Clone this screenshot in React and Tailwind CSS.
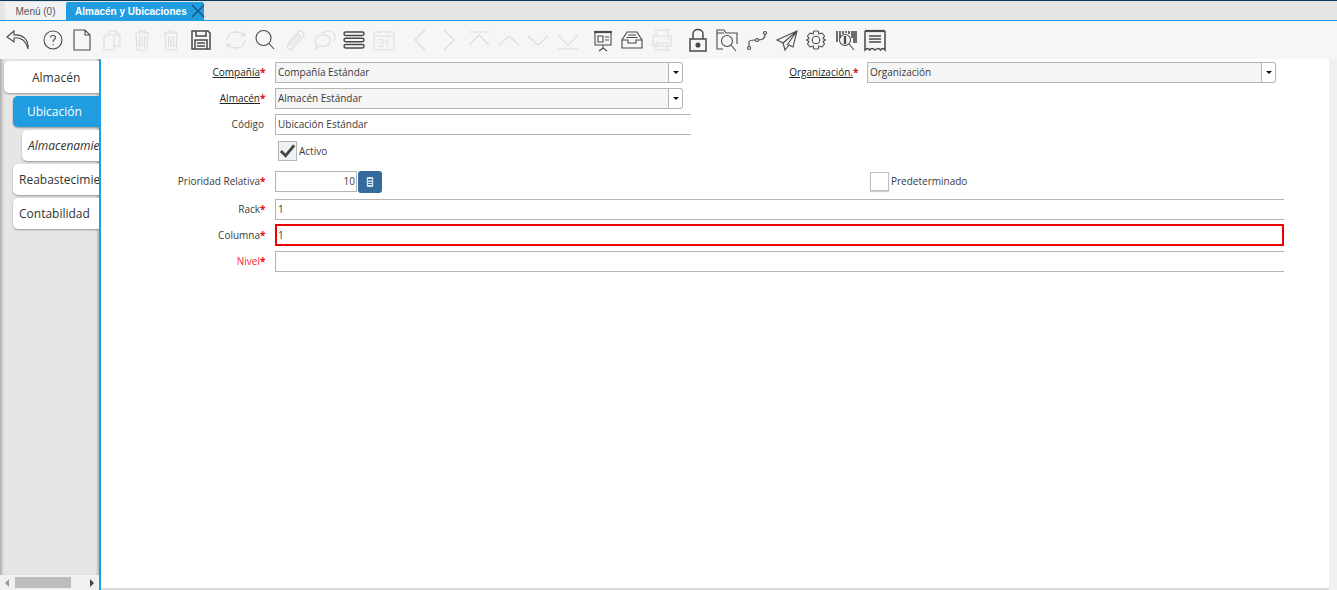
import React from "react";

const font = "font-['Open_Sans','Noto_Sans',sans-serif]";

// toolbar icons, drawn in a 28x28 box
const Undo = () => (
  <path d="M9 5 L2 11 L9 16 L9 12 C15 11 21 14 23 23 C24 13 17 8 9 9 Z" />
);
const Help = () => (
  <>
    <circle cx="14" cy="14" r="9" />
    <path d="M11.5 11.5 C11.5 8.8 16.5 8.8 16.5 11.5 C16.5 13.5 14 13.5 14 16" />
    <path d="M14 18 L14 19.2" />
  </>
);
const NewDoc = () => <path d="M6 4 H17 L22 9 V24 H6 Z M17 4 V9 H22" />;
const Copy = () => <path d="M8 9 H16 V24 H6 V11 Z M11 9 V5 H18 L22 9 V20 H16 M18 5 V9 H22" />;
const Trash = () => (
  <path d="M7 7 H21 M11 7 V5 H17 V7 M8 7 L9 24 H19 L20 7 M11.5 10 V21 M14 10 V21 M16.5 10 V21" />
);
const Save = () => (
  <path d="M5 5 H21 L23 7 V23 H5 Z M9 5 V10 H19 V5 M8 23 V14 H20 V23 M10 17 H18 M10 20 H18" />
);
const Refresh = () => (
  <path d="M5 14 C5 8 12 4 19 7 L23 10 M23 5 V10 H18 M23 14 C23 20 16 24 9 21 L5 18 M5 23 V18 H10" />
);
const Search = () => (
  <>
    <circle cx="12.5" cy="12" r="7.5" />
    <path d="M18 17.5 L23 23" />
  </>
);
const Clip = () => (
  <path d="M7 17 L17 6 C20 3 25 7 22 11 L11 23 C9 25 5 22 7 19 L17 9 C18 8 20 10 19 11 L10 20" />
);
const Chat = () => (
  <path d="M4 15 C4 11 8 9 12 9 C17 9 20 12 19 16 C18 20 12 21 9 20 L5 23 L6 19 C5 18 4 17 4 15 Z M11 8 C13 5 18 4 21 6 C25 8 25 13 22 15" />
);
const Lines = () => (
  <>
    <rect x="4" y="6" width="20" height="3.4" rx="1.7" />
    <rect x="4" y="12.3" width="20" height="3.4" rx="1.7" />
    <rect x="4" y="18.6" width="20" height="3.4" rx="1.7" />
  </>
);
const Calendar = () => (
  <>
    <path d="M4 6 H24 V24 H4 Z M4 10 H24 M9 4 V7 M19 4 V7" />
    <text x="14" y="21" textAnchor="middle" fontSize="10" fill="currentColor" stroke="none">
      31
    </text>
  </>
);
const Prev = () => <path d="M19 4 L9 14 L19 24" />;
const Next = () => <path d="M9 4 L19 14 L9 24" />;
const First = () => <path d="M4 6 H24 M4 19 L14 9 L24 19" />;
const Up = () => <path d="M4 19 L14 10 L24 19" />;
const Down = () => <path d="M4 10 L14 19 L24 10" />;
const Last = () => <path d="M4 9 L14 19 L24 9 M4 23 H24" />;
const Board = () => (
  <>
    <path d="M5 6 H23" strokeWidth="2.2" />
    <path d="M6 6 V19 H22 V6 M14 19 V22 M10 25 L14 22 L18 25 M9 10 H14 V16 H9 Z M16 11 H20 M16 14 H20" />
  </>
);
const Tray = () => (
  <path d="M9 6 H19 L24 14 V22 H4 V14 Z M4 14 H10 V17 H18 V14 H24 M10 9 H18 M8.5 11.5 H19.5" />
);
const Printer = () => (
  <path d="M8 10 V4 H20 V10 M5 10 H23 V20 H5 Z M8 17 H20 V24 H8 Z M19 13 H21" />
);
const Lock = () => (
  <>
    <path d="M9 13 V8 C9 2 19 2 19 8 V13 M6 13 H22 V25 H6 Z" />
    <circle cx="14" cy="19" r="1.8" fill="currentColor" />
  </>
);
const FolderSearch = () => (
  <>
    <path d="M10 23 H4 V4 H11 L13 7 H24 V18 M4 7 H11" />
    <circle cx="14" cy="15" r="5.5" />
    <path d="M18 19 L23 25" />
  </>
);
const Route = () => (
  <>
    <circle cx="6" cy="22" r="1.5" />
    <circle cx="14" cy="14" r="1.5" />
    <circle cx="22" cy="7" r="1.5" />
    <path d="M6 20.5 V16 C6 14.5 8 14 12.5 14 M15.5 14 C19 14 22 13 22 8.5" />
  </>
);
const Send = () => <path d="M24 5 L4 14 L10 17 L12 24 L16 19 L20 21 Z M24 5 L10 17 M24 5 L14 19" />;
const Gear = () => (
  <>
    <circle cx="14" cy="14" r="3.8" />
    <path
      strokeLinejoin="round"
      d="M12 5 H16 L17 8 L20 7 L22.5 10 L21 12.5 L23.5 14 L21 15.5 L22.5 18 L20 21 L17 20 L16 23 H12 L11 20 L8 21 L5.5 18 L7 15.5 L4.5 14 L7 12.5 L5.5 10 L8 7 L11 8 Z"
    />
  </>
);
const Barcode = () => (
  <>
    <path d="M5 16 V5 M8 12 V5 M11 8 V5 M14 7 V5 M17 8 V5 M20 12 V5 M22 17 V5 M24 17 V5" strokeWidth="1.6" />
    <circle cx="13" cy="14" r="5.5" />
    <path d="M13 10 V18" strokeWidth="2.4" />
    <path d="M17 18 L22 24" />
  </>
);
const Receipt = () => (
  <>
    <path d="M4 5 H24" strokeWidth="2.2" />
    <path d="M4 5 V24 C6 22 7 22 8.5 24 C10 22 12 22 14 24 C17 22 18 22 19.5 24 C21 22 22 22 24 24 V5 M8 10 H20 M8 13 H20 M8 16 H20" />
  </>
);

const ToolIcon = ({ children, off, heavy }) => (
  <div className="flex w-[29.6px] shrink-0 justify-center">
    <svg
      viewBox="0 0 28 28"
      fill="none"
      stroke="currentColor"
      strokeWidth={heavy ? 1.5 : 1.1}
      className={`h-[28px] w-[28px] ${off ? "text-[#dcdcdc]" : "text-[#4a4a4a]"}`}
    >
      {children}
    </svg>
  </div>
);

const Caret = () => (
  <span className="border-x-[3.5px] border-t-[3.5px] border-x-transparent border-t-[#111111]" />
);

const Select = ({ value, width }) => (
  <div className={`flex h-[21px] ${width}`}>
    <div className="flex min-w-0 flex-1 items-center border border-[#b5b5b5] bg-[#f5f5f5] pl-[2px] text-[10px] text-[#3a3a3a]">
      {value}
    </div>
    <div className="flex w-[14px] items-center justify-center rounded-r-[3px] border border-l-0 border-[#b5b5b5] bg-white">
      <Caret />
    </div>
  </div>
);

const Label = ({ children, req, link, red, width = "w-[163px]" }) => (
  <div className={`flex shrink-0 justify-end text-[10px] ${width} ${red ? "text-[#ff2233]" : "text-[#3a3a3a]"}`}>
    <span className={link ? "underline text-[#222222]" : ""}>{children}</span>
    {req && <span className="w-[4px] font-bold text-[#e01020]">*</span>}
  </div>
);

const Input = ({ value, className = "" }) => (
  <div className={`flex h-[21px] items-center border-y border-l border-[#b5b5b5] bg-white pl-[2px] text-[10px] text-[#3a3a3a] ${className}`}>
    {value}
  </div>
);

const Tab = ({ label, active, italic, indent, height = "h-[31px]", text = "pl-[6px]" }) => (
  <div
    className={`mb-[3px] flex items-center overflow-hidden whitespace-nowrap rounded-l-[5px] shadow-[0_1px_2px_rgba(0,0,0,0.35)] ${height} ${indent} ${text} ${
      active ? "bg-[#1f9de0] font-medium text-white" : "bg-white text-[#333333]"
    } ${italic ? "italic" : ""}`}
  >
    {label}
  </div>
);

export default function App() {
  return (
    <div className={`flex h-[590px] w-[1337px] flex-col overflow-hidden bg-white ${font}`}>
      {/* window tabs */}
      <div className="h-[1px] bg-[#0a3a5c]" />
      <div className="flex h-[19px] items-end bg-[#e6e6e6] pl-[5px] font-['Liberation_Sans',sans-serif] text-[10px]">
        <div className="flex h-[18px] w-[61px] items-center justify-center bg-[#f2f2f2] text-[#555555]">
          Menú (0)
        </div>
        <div className="flex h-[18px] w-[138px] items-center whitespace-nowrap rounded-t-[2px] bg-[#1f9de0] pl-[9px] font-bold text-white">
          Almacén y Ubicaciones
          <svg viewBox="0 0 14 14" stroke="#1b4d72" strokeWidth="1.2" className="ml-[4px] h-[14px] w-[14px] shrink-0">
            <path d="M1 1 L13 13 M13 1 L1 13" />
          </svg>
        </div>
      </div>
      <div className="h-[1px] bg-[#1f9de0]" />

      {/* toolbar */}
      <div className="flex h-[38px] items-center bg-[#f6f6f6] pl-[4px]">
        <ToolIcon><Undo /></ToolIcon>
        <div className="flex ml-[4.4px]">
          <ToolIcon><Help /></ToolIcon>
          <ToolIcon><NewDoc /></ToolIcon>
          <ToolIcon off><Copy /></ToolIcon>
          <ToolIcon off><Trash /></ToolIcon>
          <ToolIcon off><Trash /></ToolIcon>
          <ToolIcon heavy><Save /></ToolIcon>
        </div>
        <div className="flex ml-[5.4px]">
          <ToolIcon off><Refresh /></ToolIcon>
          <ToolIcon><Search /></ToolIcon>
          <ToolIcon off><Clip /></ToolIcon>
          <ToolIcon off><Chat /></ToolIcon>
          <ToolIcon heavy><Lines /></ToolIcon>
          <ToolIcon off><Calendar /></ToolIcon>
        </div>
        <div className="flex ml-[6.6px]">
          <ToolIcon off><Prev /></ToolIcon>
          <ToolIcon off><Next /></ToolIcon>
          <ToolIcon off><First /></ToolIcon>
          <ToolIcon off><Up /></ToolIcon>
          <ToolIcon off><Down /></ToolIcon>
          <ToolIcon off><Last /></ToolIcon>
        </div>
        <div className="flex ml-[5.4px]">
          <ToolIcon><Board /></ToolIcon>
          <ToolIcon><Tray /></ToolIcon>
          <ToolIcon off><Printer /></ToolIcon>
        </div>
        <div className="flex ml-[6.2px]">
          <ToolIcon heavy><Lock /></ToolIcon>
          <ToolIcon><FolderSearch /></ToolIcon>
          <ToolIcon><Route /></ToolIcon>
          <ToolIcon><Send /></ToolIcon>
          <ToolIcon><Gear /></ToolIcon>
          <ToolIcon><Barcode /></ToolIcon>
          <ToolIcon heavy><Receipt /></ToolIcon>
        </div>
      </div>

      <div className="flex min-h-0 flex-1">
        {/* left tabs */}
        <div className="flex w-[99px] shrink-0 flex-col bg-[#e6e6e6]">
          <div className="flex-1 pt-[2px] text-[12px] shadow-[inset_4px_0_3px_-2px_rgba(0,0,0,0.25),inset_-3px_0_3px_-2px_rgba(0,0,0,0.3)]">
            <Tab label="Almacén" height="h-[32px] pt-[1px]" text="pl-[28px]" indent="ml-[4px]" />
            <Tab label="Ubicación" active indent="ml-[13px]" text="pl-[14px]" />
            <Tab label="Almacenamiento" italic indent="ml-[22px]" />
            <Tab label="Reabastecimiento" indent="ml-[13px]" />
            <Tab label="Contabilidad" indent="ml-[13px]" />
          </div>
          <div className="flex h-[15px] items-center bg-[#f0f0f0]">
            <span className="ml-[5px] border-y-[4px] border-r-[4px] border-y-transparent border-r-[#999999]" />
            <div className="ml-[6px] h-[11px] w-[56px] bg-[#bdbdbd]" />
            <span className="ml-[19px] border-y-[4px] border-l-[4px] border-y-transparent border-l-[#444444]" />
          </div>
        </div>
        <div className="w-[2px] shrink-0 bg-[#1f9de0]" />

        {/* form */}
        <div className="flex min-w-0 flex-1 flex-col border-b-2 border-[#d8d8d8] pr-[45px]">
          <div className="flex h-[26px] items-center">
            <Label req link>Compañía</Label>
            <div className="w-[11px]" />
            <Select value="Compañía Estándar" width="w-[408px]" />
            <Label req link width="w-[174px]">Organización.</Label>
            <div className="w-[10px]" />
            <Select value="Organización" width="w-[409px]" />
          </div>
          <div className="flex h-[26px] items-center">
            <Label req link>Almacén</Label>
            <div className="w-[11px]" />
            <Select value="Almacén Estándar" width="w-[408px]" />
          </div>
          <div className="flex h-[26px] items-center">
            <Label>Código</Label>
            <div className="w-[11px]" />
            <Input value="Ubicación Estándar" className="w-[416px]" />
          </div>
          <div className="flex h-[28px] items-center pl-[177px]">
            <div className="flex h-[20px] w-[19px] items-center justify-center border border-[#b5b5b5] bg-[#eef1f4]">
              <svg viewBox="0 0 18 18" fill="none" stroke="#444444" strokeWidth="3" className="h-[18px] w-[18px]">
                <path d="M2 9 L7 14 L16 3" />
              </svg>
            </div>
            <span className="ml-[2px] text-[10px] text-[#3a3a3a]">Activo</span>
          </div>
          <div className="flex h-[31px] items-center pt-[2px]">
            <Label req>Prioridad Relativa</Label>
            <div className="w-[11px]" />
            <div className="flex h-[21px] w-[82px] items-center justify-end border border-[#b5b5b5] pr-[1px] text-[10px] text-[#3a3a3a]">
              10
            </div>
            <div className="ml-[1px] flex h-[22px] w-[24px] items-center justify-center rounded-[3px] bg-[#336b9c]">
              <svg viewBox="0 0 10 10" className="h-[10px] w-[8px]" preserveAspectRatio="none">
                <rect x="1" y="0" width="8" height="10" rx="1" fill="#d7e3ee" />
                <rect x="2.5" y="2" width="5" height="1.5" fill="#336b9c" />
                <rect x="2.5" y="5" width="5" height="1" fill="#336b9c" />
                <rect x="2.5" y="7" width="5" height="1" fill="#336b9c" />
              </svg>
            </div>
            <div className="ml-[488px] h-[19px] w-[19px] border border-[#c0c0c0] shadow-[0_1px_1px_rgba(0,0,0,0.2)]" />
            <span className="ml-[2px] text-[10px] text-[#3a3a3a]">Predeterminado</span>
          </div>
          <div className="flex h-[26px] items-center">
            <Label req>Rack</Label>
            <div className="w-[11px]" />
            <Input value="1" className="flex-1" />
          </div>
          <div className="flex h-[26px] items-center">
            <Label req>Columna</Label>
            <div className="w-[11px]" />
            <div className="flex h-[22px] flex-1 items-center border-2 border-[#f00000] pl-[1px] text-[10px] text-[#3a3a3a]">
              1
            </div>
          </div>
          <div className="flex h-[26px] items-center">
            <Label req red>Nivel</Label>
            <div className="w-[11px]" />
            <Input className="flex-1" />
          </div>
        </div>
        <div className="w-[8px] shrink-0 bg-[#f0f0f0]" />
      </div>
    </div>
  );
}
